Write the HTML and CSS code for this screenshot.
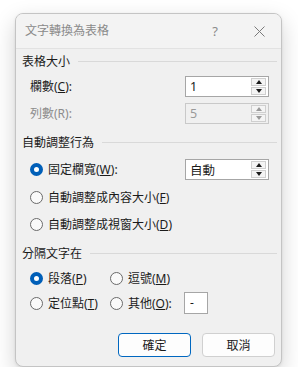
FILE: index.html
```html
<!DOCTYPE html>
<html lang="zh-Hant">
<head>
  <meta charset="UTF-8" />
  <title>文字轉換為表格</title>
  <link rel="stylesheet" href="styles.css">
</head>
<body>

  <div class="dialog">
    <div class="titlebar">
      <span class="title">文字轉換為表格</span>
      <span class="help">?</span>
      <svg class="close" width="11" height="11" viewBox="0 0 11 11">
        <path d="M0.5 0.5 L10.5 10.5 M10.5 0.5 L0.5 10.5" stroke="#7a7a7a" stroke-width="1" fill="none"/>
      </svg>
    </div>

    <div class="content">
      <div class="section">
        <span>表格大小</span>
        <div class="rule"></div>
      </div>

      <div class="row spin-row first">
        <span class="label">欄數(<u>C</u>):</span>
        <div class="spin">
          <span class="value">1</span>
          <div class="arrows">
            <div class="arrow"><i class="up"></i></div>
            <div class="arrow"><i class="down"></i></div>
          </div>
        </div>
      </div>

      <div class="row spin-row second disabled">
        <span class="label">列數(R):</span>
        <div class="spin">
          <span class="value">5</span>
          <div class="arrows">
            <div class="arrow"><i class="up"></i></div>
            <div class="arrow"><i class="down"></i></div>
          </div>
        </div>
      </div>

      <div class="section sec-2">
        <span>自動調整行為</span>
        <div class="rule"></div>
      </div>

      <div class="row spin-row fixed">
        <label class="radio"><span class="dot checked"></span>固定欄寬(<u>W</u>):</label>
        <div class="spin">
          <span class="value">自動</span>
          <div class="arrows">
            <div class="arrow"><i class="up"></i></div>
            <div class="arrow"><i class="down"></i></div>
          </div>
        </div>
      </div>

      <div class="row fit-content">
        <label class="radio"><span class="dot"></span>自動調整成內容大小(<u>F</u>)</label>
      </div>

      <div class="row fit-window">
        <label class="radio"><span class="dot"></span>自動調整成視窗大小(<u>D</u>)</label>
      </div>

      <div class="section sec-3">
        <span>分隔文字在</span>
        <div class="rule"></div>
      </div>

      <div class="row sep-row para">
        <label class="radio col1"><span class="dot checked"></span>段落(<u>P</u>)</label>
        <label class="radio"><span class="dot"></span>逗號(<u>M</u>)</label>
      </div>

      <div class="row sep-row tabs">
        <label class="radio col1"><span class="dot"></span>定位點(<u>T</u>)</label>
        <label class="radio other"><span class="dot"></span>其他(<u>O</u>):</label>
        <div class="char-box">-</div>
      </div>

      <div class="buttons">
        <button class="btn primary">確定</button>
        <button class="btn">取消</button>
      </div>
    </div>
  </div>

</body>
</html>
```

FILE: styles.css
```css
* {
  box-sizing: border-box;
}

body {
  margin: 0;
  padding: 13px 0 0 15px;
  background: #ffffff;
  font-family: "Noto Sans", "Noto Sans CJK TC", sans-serif;
  font-size: 12px;
  color: #1b1b1b;
}

.dialog {
  width: 267px;
  height: 354px;
  background: #f0f0f0;
  border: 1px solid #c4c4c4;
  border-radius: 8px;
  box-shadow: 0 8px 22px rgba(0, 0, 0, 0.18), 0 1px 3px rgba(0, 0, 0, 0.08);
  overflow: hidden;
}

.titlebar {
  height: 35px;
  display: flex;
  align-items: center;
  padding: 0 0 0 9px;
  border-bottom: 1px solid #e2e2e2;
  background: #f3f3f3;
}

.title {
  flex: 1;
  color: #8a8a8a;
  font-size: 12px;
  line-height: 1;
}

.help {
  color: #8a8a8a;
  font-size: 13px;
  margin-right: 36px;
}

.close {
  margin-right: 16px;
}

.content {
  padding: 2px 0 0 6px;
}

.section {
  height: 20px;
  display: flex;
  align-items: center;
  padding-right: 4px;
}

.section .rule {
  flex: 1;
  height: 1px;
  background: #d9d9d9;
  margin-left: 8px;
}

.sec-2 {
  margin-top: 8px;
}

.sec-3 {
  margin-top: 8px;
}

.row {
  height: 22px;
  display: flex;
  align-items: center;
  padding-left: 8px;
}

.spin-row {
  justify-content: space-between;
  padding-right: 12px;
}

.first {
  margin-top: 4px;
}

.second {
  margin-top: 5px;
}

.fixed {
  margin-top: 6px;
}

.fit-content {
  margin-top: 6px;
}

.fit-window {
  margin-top: 5px;
}

.para {
  margin-top: 4px;
}

.tabs {
  margin-top: 3px;
}

.disabled .label {
  color: #8c8c8c;
}

.spin {
  width: 84px;
  height: 21px;
  background: #ffffff;
  border: 1px solid #a6a6a6;
  display: flex;
  align-items: center;
  justify-content: space-between;
  padding: 0 2px 0 4px;
}

.spin .value {
  font-size: 12.5px;
}

.disabled .spin {
  background: #f0f0f0;
  border-color: #c9c9c9;
}

.disabled .spin .value {
  color: #9a9a9a;
}

.arrows {
  width: 15px;
  height: 17px;
  display: flex;
  flex-direction: column;
  gap: 1px;
}

.arrow {
  flex: 1;
  background: #f4f4f4;
  border: 1px solid #cfcfcf;
  display: flex;
  align-items: center;
  justify-content: center;
}

.arrow i {
  width: 0;
  height: 0;
  border-left: 3px solid transparent;
  border-right: 3px solid transparent;
}

.arrow .up {
  border-bottom: 4px solid #1b1b1b;
}

.arrow .down {
  border-top: 4px solid #1b1b1b;
}

.disabled .arrow .up {
  border-bottom-color: #9a9a9a;
}

.disabled .arrow .down {
  border-top-color: #9a9a9a;
}

.radio {
  display: flex;
  align-items: center;
  white-space: nowrap;
}

.dot {
  width: 13px;
  height: 13px;
  border-radius: 50%;
  border: 1px solid #6a6a6a;
  background: #fafafa;
  margin-right: 5px;
  flex-shrink: 0;
}

.dot.checked {
  border: 4px solid #005fb8;
  background: #ffffff;
}

u {
  text-underline-offset: 1px;
}

.sep-row .col1 {
  width: 80px;
}

.other {
  width: 74px;
}

.char-box {
  width: 24px;
  height: 22px;
  background: #ffffff;
  border: 1px solid #a6a6a6;
  padding-left: 5px;
  line-height: 19px;
}

.buttons {
  display: flex;
  justify-content: flex-end;
  gap: 11px;
  padding-right: 6px;
  margin-top: 19px;
}

.btn {
  width: 73px;
  height: 24px;
  background: #fdfdfd;
  border: 1px solid #d0d0d0;
  border-radius: 4px;
  font-family: inherit;
  font-size: 12px;
  color: #1b1b1b;
  padding: 0;
}

.btn.primary {
  border-color: #0067c0;
}
```
